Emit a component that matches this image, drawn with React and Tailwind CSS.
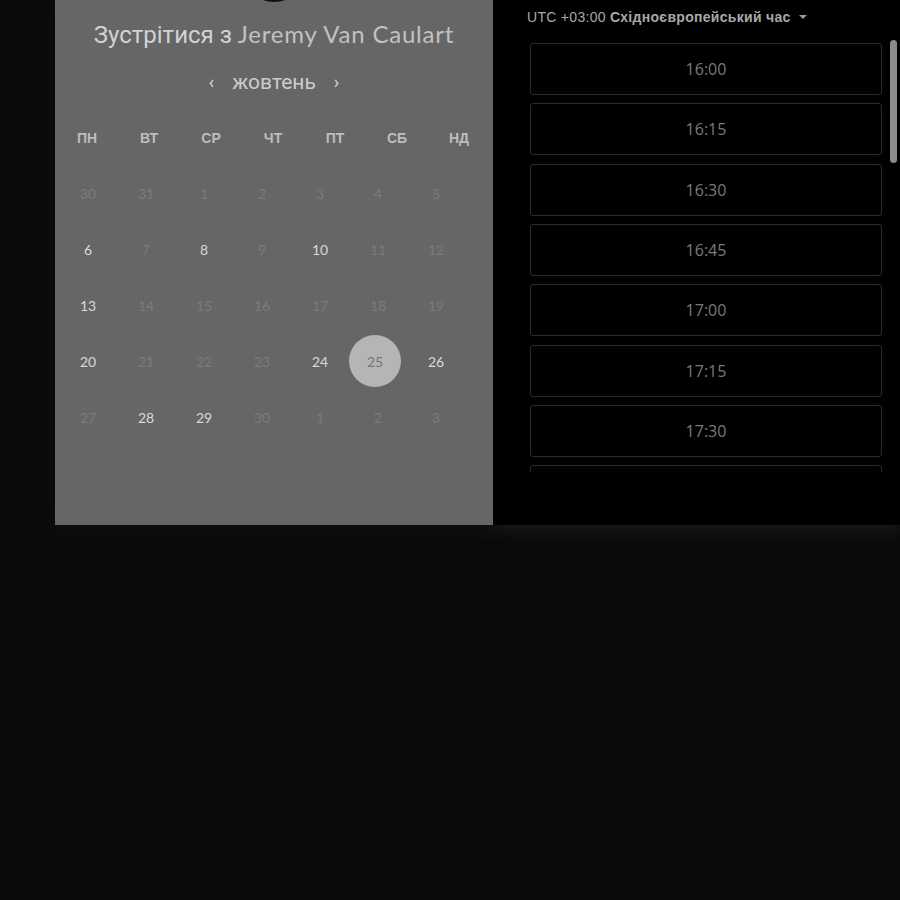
import React from 'react';

const weekDays = ['ПН', 'ВТ', 'СР', 'ЧТ', 'ПТ', 'СБ', 'НД'];

// [label, available, selected]
const days = [
  ['30', false], ['31', false], ['1', false], ['2', false], ['3', false], ['4', false], ['5', false],
  ['6', true], ['7', false], ['8', true], ['9', false], ['10', true], ['11', false], ['12', false],
  ['13', true], ['14', false], ['15', false], ['16', false], ['17', false], ['18', false], ['19', false],
  ['20', true], ['21', false], ['22', false], ['23', false], ['24', true], ['25', true, true], ['26', true],
  ['27', false], ['28', true], ['29', true], ['30', false], ['1', false], ['2', false], ['3', false],
];

const slots = ['16:00', '16:15', '16:30', '16:45', '17:00', '17:15', '17:30', '17:45'];

const App = () => {
  return (
    <div className="min-h-[900px] bg-[#0b0b0b] pl-[55px] overflow-hidden">
      <div className="flex h-[525px] shadow-[0_4px_14px_rgba(30,30,30,0.9)]">
        {/* calendar side */}
        <div className="relative z-10 w-[438px] shrink-0 bg-[#666666] shadow-[0_0_18px_rgba(0,0,0,0.95)] flex flex-col items-center">
          <div className="-mt-[64px] w-[66px] h-[66px] rounded-full bg-[#111111]" />
          <h1 className="mt-4 text-[24px] leading-8 text-[#d2d2d2] whitespace-nowrap" style={{ fontFamily: 'Roboto, sans-serif' }}>
            Зустрітися з <span className="text-[#c2c2c2] tracking-[0.8px]" style={{ fontFamily: 'Lato, sans-serif' }}>Jeremy Van Caulart</span>
          </h1>
          <div className="mt-[17px] flex items-center gap-[18px] text-[21px] leading-7 text-[#cccccc]" style={{ fontFamily: 'Roboto, sans-serif' }}>
            <span className="text-[18px] text-[#d8d8d8]">‹</span>
            <span>жовтень</span>
            <span className="text-[18px] text-[#d8d8d8]">›</span>
          </div>

          <div className="mt-[32px] grid grid-cols-7 w-[434px] self-start ml-[1px]">
            {weekDays.map((d) => (
              <div key={d} className="text-center text-[14px] leading-5 font-bold text-[#bdbdbd]" style={{ fontFamily: '"Liberation Sans", Arial, sans-serif' }}>
                {d}
              </div>
            ))}
          </div>

          <div className="mt-[17px] grid grid-cols-7 w-[406px] self-start ml-[4px]" style={{ fontFamily: 'Lato, sans-serif' }}>
            {days.map(([label, avail, selected], i) => (
              <div key={i} className="h-[56px] flex items-center justify-center">
                {selected ? (
                  <div className="w-[52px] h-[52px] -ml-[6px] rounded-full bg-[#b5b5b5] flex items-center justify-center text-[14px] text-[#757575]">
                    {label}
                  </div>
                ) : (
                  <span className={avail ? 'text-[14px] text-[#d9d9d9]' : 'text-[14px] text-[#7b7b7b]'}>{label}</span>
                )}
              </div>
            ))}
          </div>
        </div>

        {/* time slots side */}
        <div className="flex-1 bg-black pl-[34px] pr-[3px]">
          <div className="mt-[9px] flex items-center text-[14px] leading-4 tracking-[0.3px] text-[#a8a8a8] whitespace-nowrap" style={{ fontFamily: '"Liberation Sans", Arial, sans-serif' }}>
            <span>UTC +03:00</span>
            <span className="ml-[4px] font-bold">Східноєвропейський час</span>
            <svg className="ml-[8px]" width="8" height="5" viewBox="0 0 8 5">
              <path d="M0 0 L8 0 L4 4 Z" fill="#9a9a9a" />
            </svg>
          </div>

          <div className="mt-[15px] flex h-[432px]">
            <div className="ml-[3px] w-[352px] overflow-hidden pt-[3px] flex flex-col gap-[8.33px]">
              {slots.map((s) => (
                <div
                  key={s}
                  className="h-[52px] shrink-0 rounded-[3px] border border-[#2c2c2c] flex items-center justify-center text-[16px] text-[#7a7a7a]"
                  style={{ fontFamily: '"Open Sans", sans-serif' }}
                >
                  {s}
                </div>
              ))}
            </div>
            <div className="ml-[8px] w-[7px]">
              <div className="h-[123px] w-[7px] rounded-full bg-[#8a8a8a]" />
            </div>
          </div>
        </div>
      </div>
    </div>
  );
};

export default App;
